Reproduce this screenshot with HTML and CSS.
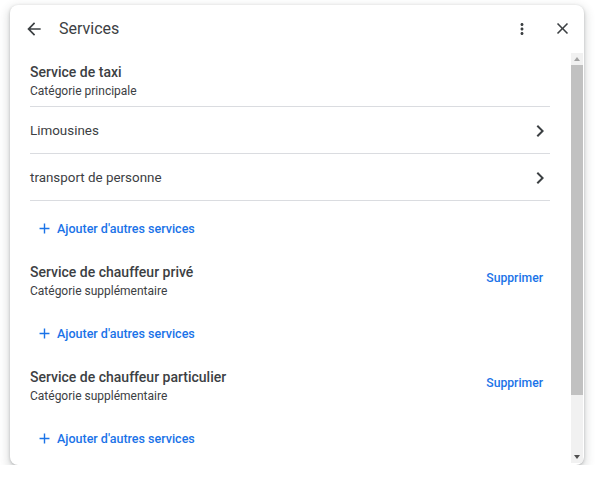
FILE: index.html
```html
<!DOCTYPE html>
<html lang="fr">
<head>
<meta charset="utf-8">
<title>Services</title>
<link rel="stylesheet" href="styles.css">
</head>
<body>
<div class="dialog">
  <div class="header">
    <span class="icon-btn back">
      <svg viewBox="0 0 24 24" width="20" height="20"><path d="M20 11H7.83l5.59-5.59L12 4l-8 8 8 8 1.41-1.41L7.83 13H20v-2z"/></svg>
    </span>
    <span class="title">Services</span>
    <span class="spacer"></span>
    <span class="icon-btn">
      <svg viewBox="0 0 24 24" width="18" height="18"><path d="M12 8c1.1 0 2-.9 2-2s-.9-2-2-2-2 .9-2 2 .9 2 2 2zm0 2c-1.1 0-2 .9-2 2s.9 2 2 2 2-.9 2-2-.9-2-2-2zm0 6c-1.1 0-2 .9-2 2s.9 2 2 2 2-.9 2-2-.9-2-2-2z"/></svg>
    </span>
    <span class="icon-btn">
      <svg viewBox="0 0 24 24" width="19" height="19"><path d="M19 6.41L17.590 5 12 10.59 6.410 5 5 6.41 10.59 12 5 17.59 6.41 19 12 13.41 17.59 19 19 17.59 13.41 12z"/></svg>
    </span>
  </div>
  <div class="main">
    <div class="content">
      <div class="primary">
        <div class="cat-name">Service de taxi</div>
        <div class="cat-type">Catégorie principale</div>
      </div>
      <div class="row">
        <span>Limousines</span>
        <svg class="chev" viewBox="0 0 24 24" width="24" height="24"><path d="M10 6L8.59 7.41 13.17 12l-4.58 4.59L10 18l6-6z"/></svg>
      </div>
      <div class="row">
        <span>transport de personne</span>
        <svg class="chev" viewBox="0 0 24 24" width="24" height="24"><path d="M10 6L8.59 7.41 13.17 12l-4.58 4.59L10 18l6-6z"/></svg>
      </div>
      <div class="add first">
        <svg viewBox="0 0 24 24" width="17" height="17"><path d="M19 13h-6v6h-2v-6H5v-2h6V5h2v6h6v2z"/></svg>
        <span>Ajouter d'autres services</span>
      </div>
      <div class="section">
        <div class="cat">
          <div class="cat-name">Service de chauffeur privé</div>
          <div class="cat-type">Catégorie supplémentaire</div>
        </div>
        <span class="remove">Supprimer</span>
      </div>
      <div class="add">
        <svg viewBox="0 0 24 24" width="17" height="17"><path d="M19 13h-6v6h-2v-6H5v-2h6V5h2v6h6v2z"/></svg>
        <span>Ajouter d'autres services</span>
      </div>
      <div class="section">
        <div class="cat">
          <div class="cat-name">Service de chauffeur particulier</div>
          <div class="cat-type">Catégorie supplémentaire</div>
        </div>
        <span class="remove">Supprimer</span>
      </div>
      <div class="add">
        <svg viewBox="0 0 24 24" width="17" height="17"><path d="M19 13h-6v6h-2v-6H5v-2h6V5h2v6h6v2z"/></svg>
        <span>Ajouter d'autres services</span>
      </div>
    </div>
    <div class="scrollbar">
      <span class="arrow up"></span>
      <span class="thumb"></span>
      <span class="track-rest"></span>
      <span class="arrow down"></span>
    </div>
  </div>
</div>
</body>
</html>
```

FILE: styles.css
```css
* { box-sizing: border-box; }
html, body { margin: 0; background: #fff; }
body {
  padding: 5px 0 0 10px;
  font-family: Roboto, "Liberation Sans", Arial, sans-serif;
  color: #3c4043;
}
.dialog {
  width: 574px;
  height: 460px;
  background: #fff;
  border-radius: 8px;
  box-shadow: 0 1px 3px rgba(60,64,67,.3), 0 4px 8px 3px rgba(60,64,67,.15);
  display: flex;
  flex-direction: column;
  overflow: hidden;
}
.header {
  height: 47px;
  flex: none;
  display: flex;
  align-items: center;
  padding: 0 10px 0 14px;
  gap: 16px;
}
.icon-btn {
  width: 24px;
  height: 24px;
  display: flex;
  align-items: center;
  justify-content: center;
  fill: #3c4043;
}
.icon-btn.back { width: 20px; margin-right: -1px; }
.title {
  font-size: 16px;
  line-height: 24px;
  color: #3c4043;
}
.spacer { flex: 1; }
.main {
  flex: 1;
  display: flex;
  min-height: 0;
}
.content {
  flex: 1;
  padding: 10px 21px 0 20px;
  overflow: hidden;
}
.cat-name {
  font-size: 14px;
  font-weight: 500;
  line-height: 20px;
  color: #3c4043;
}
.cat-type {
  font-size: 12px;
  line-height: 18px;
  color: #3c4043;
}
.primary {
  padding-bottom: 6px;
  border-bottom: 1px solid #dadce0;
}
.row {
  height: 47px;
  display: flex;
  align-items: center;
  justify-content: space-between;
  border-bottom: 1px solid #dadce0;
  font-size: 13.4px;
  color: #3c4043;
  padding-top: 1px;
}
.chev { fill: #3c4043; margin-right: -2px; }
.add {
  display: flex;
  align-items: center;
  margin-top: 23px;
  padding-left: 6px;
  gap: 4px;
  height: 20px;
  font-size: 12.5px;
  font-weight: 500;
  color: #1a73e8;
  fill: #1a73e8;
}
.add.first { margin-top: 17px; }
.section {
  margin-top: 24px;
  display: flex;
  justify-content: space-between;
  align-items: flex-start;
}
.remove {
  margin-top: 6px;
  padding: 0 7px;
  line-height: 20px;
  font-size: 12.2px;
  font-weight: 500;
  color: #1a73e8;
}
.scrollbar {
  width: 12px;
  margin: 1px 1px 2px 0;
  background: #f1f1f1;
  display: flex;
  flex-direction: column;
  align-items: center;
}
.arrow {
  height: 12px;
  flex: none;
  width: 0;
  border-left: 3px solid transparent;
  border-right: 3px solid transparent;
}
.arrow.up {
  border-bottom: 4px solid #a3a3a3;
  margin-top: 4px;
  height: 0;
  margin-bottom: 4px;
}
.arrow.down {
  border-top: 4px solid #505050;
  height: 0;
  margin-top: 4px;
  margin-bottom: 4px;
}
.thumb {
  width: 12px;
  height: 330px;
  background: #c1c1c1;
  flex: none;
}
.track-rest { flex: 1; }
```
